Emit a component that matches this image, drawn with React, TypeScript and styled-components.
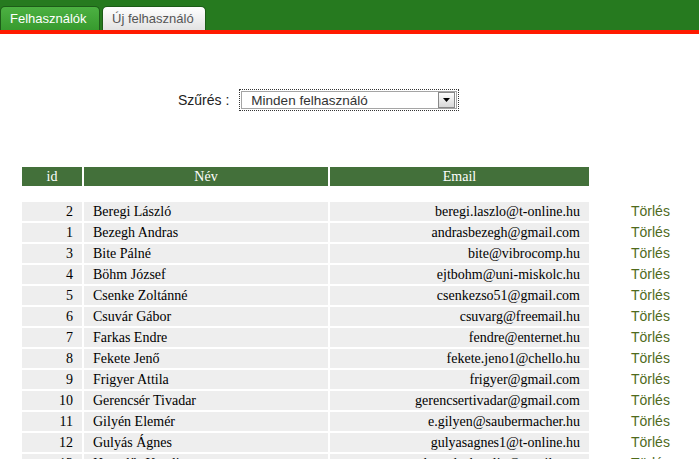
import React from 'react';
import styled, { createGlobalStyle } from 'styled-components';

const GlobalStyle = createGlobalStyle`
	body {
		margin: 0;
		background: #fff;
		font-family: 'Liberation Sans', Arial, sans-serif;
	}
`;

const TopBar = styled.div`
	display: flex;
	align-items: flex-end;
	gap: 2px;
	height: 24px;
	padding-top: 6px;
	background: #267a1f;
	border-bottom: 4px solid #ff1a00;
`;

const Tab = styled.div<{ active?: boolean }>`
	height: 24px;
	box-sizing: border-box;
	padding: 0 9px;
	display: flex;
	align-items: center;
	font-size: 13px;
	border: 1px solid #1d5c18;
	border-bottom: none;
	border-radius: 5px 5px 0 0;
	color: ${(p) => (p.active ? '#ffffff' : '#555555')};
	background: ${(p) => (p.active ? 'linear-gradient(#4cb142, #379a2e)' : 'linear-gradient(#ffffff, #e2e2e2)')};
	width: ${(p) => (p.active ? '100px' : '104px')};
`;

const FilterRow = styled.div`
	display: flex;
	align-items: center;
	margin-top: 55px;
	padding-left: 178px;
	gap: 10px;
`;

const FilterLabel = styled.span`
	font-size: 14px;
	color: #222;
`;

const FakeSelect = styled.div`
	width: 220px;
	height: 22px;
	box-sizing: border-box;
	border: 1px dotted #333;
	padding: 1px;
	display: flex;
`;

const SelectInner = styled.div`
	flex: 1;
	display: flex;
	align-items: center;
	border: 1px solid #a5a5a5;
	padding-left: 9px;
	font-size: 13.5px;
	color: #333;
`;

const SelectText = styled.span`
	flex: 1;
`;

const ArrowButton = styled.div`
	width: 17px;
	height: 16px;
	margin-right: 1px;
	box-sizing: border-box;
	border: 1px solid #888;
	background: linear-gradient(#fdfdfd, #d8d8d8);
	display: flex;
	align-items: center;
	justify-content: center;
`;

const Table = styled.table`
	margin: 54px 0 0 20px;
	border-collapse: separate;
	border-spacing: 2px;
	font-family: 'Liberation Serif', 'Times New Roman', serif;
	font-size: 14px;
`;

const HeadCell = styled.th<{ w: number }>`
	width: ${(p) => p.w}px;
	height: 19px;
	padding: 0;
	background: #43703a;
	color: #fff;
	font-weight: normal;
	text-align: center;
	line-height: 19px;
`;

const Spacer = styled.td`
	height: 12px;
	padding: 0;
`;

const Cell = styled.td<{ align?: string }>`
	height: 19px;
	padding: 0 9px;
	background: #eeeeee;
	color: #000;
	line-height: 19px;
	text-align: ${(p) => p.align || 'left'};
	white-space: nowrap;
`;

const DeleteCell = styled.td`
	padding: 0 0 0 40px;
	font-family: 'Liberation Sans', Arial, sans-serif;
	font-size: 14px;
	color: #4f6a1c;
	line-height: 19px;
`;

const users = [
	[2, 'Beregi László', 'beregi.laszlo@t-online.hu'],
	[1, 'Bezegh Andras', 'andrasbezegh@gmail.com'],
	[3, 'Bite Pálné', 'bite@vibrocomp.hu'],
	[4, 'Böhm József', 'ejtbohm@uni-miskolc.hu'],
	[5, 'Csenke Zoltánné', 'csenkezso51@gmail.com'],
	[6, 'Csuvár Gábor', 'csuvarg@freemail.hu'],
	[7, 'Farkas Endre', 'fendre@enternet.hu'],
	[8, 'Fekete Jenő', 'fekete.jeno1@chello.hu'],
	[9, 'Frigyer Attila', 'frigyer@gmail.com'],
	[10, 'Gerencsér Tivadar', 'gerencsertivadar@gmail.com'],
	[11, 'Gilyén Elemér', 'e.gilyen@saubermacher.hu'],
	[12, 'Gulyás Ágnes', 'gulyasagnes1@t-online.hu'],
	[13, 'Hegedűs Katalin', 'hegeduskatalin@gmail.com']
];

export default function App() {
	return (
		<>
			<GlobalStyle />
			<TopBar>
				<Tab active>Felhasználók</Tab>
				<Tab>Új felhasználó</Tab>
			</TopBar>
			<FilterRow>
				<FilterLabel>Szűrés :</FilterLabel>
				<FakeSelect>
					<SelectInner>
						<SelectText>Minden felhasználó</SelectText>
						<ArrowButton>
							<svg width="7" height="4" viewBox="0 0 7 4">
								<path d="M0 0 L7 0 L3.5 4 Z" fill="#000" />
							</svg>
						</ArrowButton>
					</SelectInner>
				</FakeSelect>
			</FilterRow>
			<Table>
				<thead>
					<tr>
						<HeadCell w={60}>id</HeadCell>
						<HeadCell w={244}>Név</HeadCell>
						<HeadCell w={259}>Email</HeadCell>
					</tr>
				</thead>
				<tbody>
					<tr>
						<Spacer colSpan={3} />
					</tr>
					{users.map(([id, name, email]) => (
						<tr key={id}>
							<Cell align="right">{id}</Cell>
							<Cell>{name}</Cell>
							<Cell align="right">{email}</Cell>
							<DeleteCell>Törlés</DeleteCell>
						</tr>
					))}
				</tbody>
			</Table>
		</>
	);
}
